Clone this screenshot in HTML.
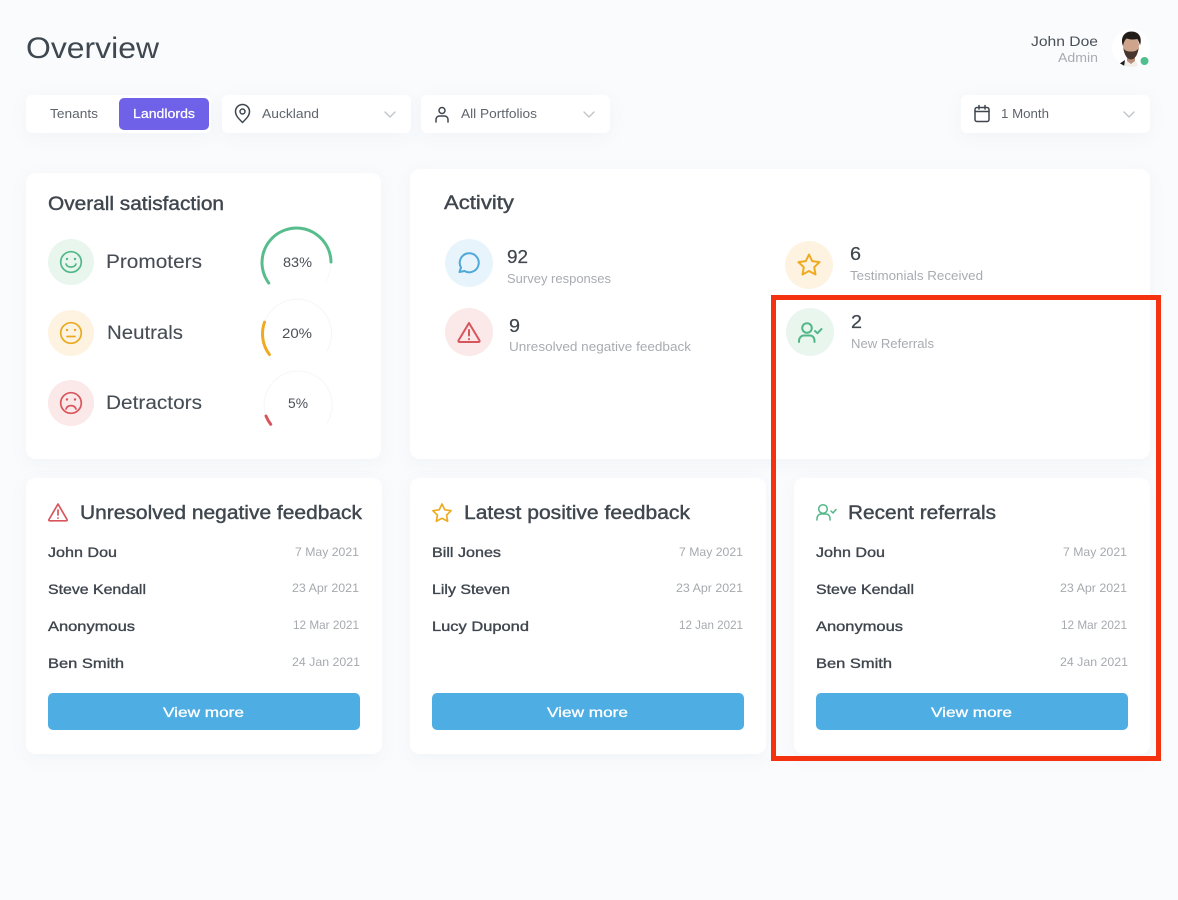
<!DOCTYPE html>
<html lang="en"><head><meta charset="utf-8"><title>Overview</title>
<style>
html,body{margin:0;padding:0;background:#f9fbfd;width:1178px;height:900px;overflow:hidden}
body{position:relative;font-family:"Liberation Sans",sans-serif}
.c{position:absolute;background:#fff;box-shadow:0 4px 18px rgba(90,110,140,.05)}
.r10{border-radius:10px}.r6{border-radius:6px}
svg.o{position:absolute;left:0;top:0}
text{font-family:"Liberation Sans",sans-serif;fill:#3f464e}
.h{font-size:19px;stroke:#3f464e;stroke-width:.4}
.l{font-size:19px;fill:#464d55;stroke:#464d55;stroke-width:.1}
.s{font-size:13px;fill:#5f656c}
.g{font-size:12.5px;fill:#a8acb2}
.d{font-size:12px;fill:#a6aab0}
.n{font-size:14px;stroke:#3f464e;stroke-width:.35}
.b{font-size:14px;fill:#fff;stroke:#fff;stroke-width:.3}
.p{font-size:14px;fill:#4a5058}
.v{font-size:18px;fill:#3f464e;stroke:#3f464e;stroke-width:.2}
.i{fill:none;stroke-linecap:round;stroke-linejoin:round}
</style></head><body>
<div class="c r6" style="left:26px;top:95px;width:185px;height:38px"></div>
<div class="c" style="left:119px;top:98px;width:90px;height:32px;border-radius:5px;background:#6f62e8;box-shadow:none"></div>
<div class="c r6" style="left:222px;top:95px;width:189px;height:38px"></div>
<div class="c r6" style="left:421px;top:95px;width:189px;height:38px"></div>
<div class="c r6" style="left:961px;top:95px;width:189px;height:38px"></div>
<div class="c r10" style="left:26px;top:173px;width:355px;height:286px"></div>
<div class="c r10" style="left:410px;top:169px;width:740px;height:290px"></div>
<div class="c r10" style="left:26px;top:478px;width:356px;height:276px"></div>
<div class="c r10" style="left:410px;top:478px;width:356px;height:276px"></div>
<div class="c r10" style="left:794px;top:478px;width:356px;height:276px"></div>
<div class="c" style="left:48px;top:693px;width:312px;height:37px;border-radius:5px;background:#4eaee3;box-shadow:none"></div>
<div class="c" style="left:432px;top:693px;width:312px;height:37px;border-radius:5px;background:#4eaee3;box-shadow:none"></div>
<div class="c" style="left:816px;top:693px;width:312px;height:37px;border-radius:5px;background:#4eaee3;box-shadow:none"></div>

<svg class="o" width="1178" height="900" viewBox="0 0 1178 900" xmlns="http://www.w3.org/2000/svg">
<defs><clipPath id="av"><circle cx="1131" cy="48" r="19"/></clipPath></defs>
<!-- header -->
<text x="26" y="58" font-size="30" textLength="133" lengthAdjust="spacingAndGlyphs" style="fill:#3f4850">Overview</text>
<text x="1031" y="46" class="p" textLength="67" lengthAdjust="spacingAndGlyphs">John Doe</text>
<text x="1058" y="62" class="g" textLength="40" lengthAdjust="spacingAndGlyphs">Admin</text>
<!-- avatar -->
<circle cx="1131" cy="48" r="19" fill="#fff"/>
<g clip-path="url(#av)">
<path d="M1123 68l2-6 6-2 6 2 2 6z" fill="#f2efeb"/>
<path d="M1119 64l6-4-1 7z" fill="#1d1d1f"/>
<path d="M1127 54h8v7l-4 3-4-3z" fill="#b98d76"/>
<ellipse cx="1131" cy="46" rx="8" ry="11" fill="#cfa48d"/>
<path d="M1123.500 48c.5 7 4 11.500 7.500 11.500s7-4.500 7.500-11.500c-1.500 3-3.500 3.500-7.500 3.500s-6-.5-7.500-3.500z" fill="#46362f"/>
<path d="M1123 46c-3-8 1-14.500 8.500-14.500s11 6 8.500 14c-.8-3-1.500-5-2.800-6.500-3.700 1-7.500.5-10.700-.5-2 2-2.800 4-3.500 7.500z" fill="#231d1a"/>
</g>
<circle cx="1144.500" cy="61" r="4" fill="#4fc08d"/>
<!-- filters -->
<text x="50" y="118" class="s" textLength="48" lengthAdjust="spacingAndGlyphs">Tenants</text>
<text x="133" y="118" font-size="13" textLength="62" lengthAdjust="spacingAndGlyphs" style="fill:#fff;stroke:#fff;stroke-width:.25">Landlords</text>
<g class="i" stroke="#3f464e" stroke-width="1.500">
<path d="M242.500 122.500c-4-4-7-7-7-11a7 7 0 0 1 14 0c0 4-3 7-7 11z"/><circle cx="242.500" cy="111.500" r="2.500"/>
<circle cx="442" cy="110.500" r="3"/><path d="M436 122v-2.500a3.500 3.500 0 0 1 3.500-3.500h5a3.500 3.500 0 0 1 3.500 3.500v2.500"/>
<rect x="975" y="107.500" width="14" height="14" rx="2"/><path d="M975 111.500h14M979 105.500v3.500M985 105.500v3.500"/>
</g>
<g class="i" stroke="#bfc3c8" stroke-width="1.300">
<path d="M385 112l5 5 5-5M584 112l5 5 5-5M1124 112l5 5 5-5"/>
</g>
<text x="262" y="118" class="s" textLength="57" lengthAdjust="spacingAndGlyphs">Auckland</text>
<text x="461" y="118" class="s" textLength="76" lengthAdjust="spacingAndGlyphs">All Portfolios</text>
<text x="1001" y="118" class="s" textLength="48" lengthAdjust="spacingAndGlyphs">1 Month</text>

<!-- satisfaction -->
<text x="48" y="210" class="h" textLength="176" lengthAdjust="spacingAndGlyphs">Overall satisfaction</text>
<circle cx="71" cy="262" r="23" fill="#e8f6ee"/>
<circle cx="71" cy="333" r="23" fill="#fdf3e0"/>
<circle cx="71" cy="403" r="23" fill="#fbe8e9"/>
<g class="i" stroke-width="1.700">
<g stroke="#52b788"><circle cx="71" cy="262" r="10.300"/><path d="M66 264c1.500 4 8.500 4 10 0"/></g>
<g stroke="#eaa920"><circle cx="71" cy="333" r="10.300"/><path d="M67 336.500h8"/></g>
<g stroke="#d9555c"><circle cx="71" cy="403" r="10.300"/><path d="M66 409c1.500-4.500 8.500-4.500 10 0"/></g>
</g>
<g>
<circle cx="67" cy="259" r="1.200" fill="#52b788"/><circle cx="75" cy="259" r="1.200" fill="#52b788"/>
<circle cx="67" cy="330" r="1.200" fill="#eaa920"/><circle cx="75" cy="330" r="1.200" fill="#eaa920"/>
<circle cx="67" cy="399.500" r="1.200" fill="#d9555c"/><circle cx="75" cy="399.500" r="1.200" fill="#d9555c"/>
</g>
<text x="106" y="268" class="l" textLength="96" lengthAdjust="spacingAndGlyphs">Promoters</text>
<text x="107" y="339" class="l" textLength="76" lengthAdjust="spacingAndGlyphs">Neutrals</text>
<text x="106" y="409" class="l" textLength="96" lengthAdjust="spacingAndGlyphs">Detractors</text>
<g class="i" stroke-width="3">
<path d="M331 263A34.500 34.500 0 0 1 326 281" stroke="#f6f7f9" stroke-width="1"/>
<path d="M268.800 283.100A34.500 34.500 0 1 1 331 262" stroke="#57bd8c"/>
<path d="M264.500 322.200A34.500 34.500 0 1 1 327 350.800" stroke="#f5f6f8" stroke-width="1"/>
<path d="M264.500 322.200A34.500 34.500 0 0 0 269.400 354.500" stroke="#eeab22"/>
<path d="M266 416A34 34 0 1 1 327 423" stroke="#f5f6f8" stroke-width="1"/>
<path d="M266 416A34 34 0 0 0 270.700 424.300" stroke="#d9555c"/>
</g>
<text x="283" y="267" class="p" textLength="29" lengthAdjust="spacingAndGlyphs">83%</text>
<text x="282" y="338" class="p" textLength="30" lengthAdjust="spacingAndGlyphs">20%</text>
<text x="288" y="408" class="p" textLength="20" lengthAdjust="spacingAndGlyphs">5%</text>

<!-- activity -->
<text x="444" y="209" class="h" textLength="70" lengthAdjust="spacingAndGlyphs">Activity</text>
<circle cx="469" cy="263" r="24" fill="#e8f4fb"/>
<circle cx="469" cy="332" r="24" fill="#fbe8e9"/>
<circle cx="809" cy="265" r="24" fill="#fdf3e0"/>
<circle cx="810" cy="332" r="24" fill="#e8f6ee"/>
<g class="i" stroke-width="2">
<path d="M459.500 272l1.500-4.500a9.500 9.500 0 1 1 3.500 3.500z" stroke="#4fa8d8"/>
<path d="M469 323l-10.500 17.500a1 1 0 0 0 1 1.500h19a1 1 0 0 0 1-1.500zM469 330v5.500M469 339v.2" stroke="#d9555c"/>
<path d="M809 254.500l3.200 6.600 7.300 1-5.300 5.100 1.300 7.300-6.500-3.500-6.500 3.500 1.300-7.300-5.300-5.100 7.300-1z" stroke="#eeab22"/>
<g stroke="#52b788"><circle cx="807" cy="328" r="4.800"/><path d="M799 342v-1c0-3.500 2.500-5.500 5-5.500h6c2.500 0 4.500 2 4.500 5.500v1"/><path d="M815 331l2.500 2.200 4-4.200"/></g>
</g>
<text x="507" y="263" class="v" textLength="21" lengthAdjust="spacingAndGlyphs">92</text>
<text x="507" y="283" class="g" textLength="104" lengthAdjust="spacingAndGlyphs">Survey responses</text>
<text x="509" y="332" class="v" textLength="11" lengthAdjust="spacingAndGlyphs">9</text>
<text x="509" y="351" class="g" textLength="182" lengthAdjust="spacingAndGlyphs">Unresolved negative feedback</text>
<text x="850" y="260" class="v" textLength="11" lengthAdjust="spacingAndGlyphs">6</text>
<text x="850" y="280" class="g" textLength="133" lengthAdjust="spacingAndGlyphs">Testimonials Received</text>
<text x="851" y="328" class="v" textLength="11" lengthAdjust="spacingAndGlyphs">2</text>
<text x="851" y="348" class="g" textLength="83" lengthAdjust="spacingAndGlyphs">New Referrals</text>

<!-- card 1 -->
<path class="i" d="M58 504l-9 15.500a.8.8 0 0 0 .7 1.300h16.600a.8.8 0 0 0 .7-1.300zM58 510v5M58 518v.2" stroke="#d9555c" stroke-width="1.700"/>
<text x="80" y="519" class="h" textLength="282" lengthAdjust="spacingAndGlyphs">Unresolved negative feedback</text>
<text x="48" y="557" class="n" textLength="69" lengthAdjust="spacingAndGlyphs">John Dou</text>
<text x="48" y="594" class="n" textLength="98" lengthAdjust="spacingAndGlyphs">Steve Kendall</text>
<text x="48" y="631" class="n" textLength="87" lengthAdjust="spacingAndGlyphs">Anonymous</text>
<text x="48" y="668" class="n" textLength="76" lengthAdjust="spacingAndGlyphs">Ben Smith</text>
<text x="295" y="556" class="d" textLength="64" lengthAdjust="spacingAndGlyphs">7 May 2021</text>
<text x="292" y="592" class="d" textLength="67" lengthAdjust="spacingAndGlyphs">23 Apr 2021</text>
<text x="293" y="629" class="d" textLength="66" lengthAdjust="spacingAndGlyphs">12 Mar 2021</text>
<text x="292" y="666" class="d" textLength="68" lengthAdjust="spacingAndGlyphs">24 Jan 2021</text>
<text x="163" y="717" class="b" textLength="81" lengthAdjust="spacingAndGlyphs">View more</text>

<!-- card 2 -->
<path class="i" d="M442 504l2.800 5.800 6.300.9-4.500 4.400 1 6.200-5.600-3-5.600 3 1-6.200-4.500-4.400 6.300-.9z" stroke="#eeab22" stroke-width="1.700"/>
<text x="464" y="519" class="h" textLength="226" lengthAdjust="spacingAndGlyphs">Latest positive feedback</text>
<text x="432" y="557" class="n" textLength="69" lengthAdjust="spacingAndGlyphs">Bill Jones</text>
<text x="432" y="594" class="n" textLength="78" lengthAdjust="spacingAndGlyphs">Lily Steven</text>
<text x="432" y="631" class="n" textLength="97" lengthAdjust="spacingAndGlyphs">Lucy Dupond</text>
<text x="679" y="556" class="d" textLength="64" lengthAdjust="spacingAndGlyphs">7 May 2021</text>
<text x="676" y="592" class="d" textLength="67" lengthAdjust="spacingAndGlyphs">23 Apr 2021</text>
<text x="679" y="629" class="d" textLength="64" lengthAdjust="spacingAndGlyphs">12 Jan 2021</text>
<text x="547" y="717" class="b" textLength="81" lengthAdjust="spacingAndGlyphs">View more</text>

<!-- card 3 -->
<g class="i" stroke="#52b788" stroke-width="1.500">
<circle cx="823" cy="509" r="4.300"/><path d="M817 520v-1.500c0-2.500 2-4.500 4-4.500h5c2.500 0 4 2 4 4.500v1.500"/><path d="M831 511l2 2 3-3.500"/>
</g>
<text x="848" y="519" class="h" textLength="148" lengthAdjust="spacingAndGlyphs">Recent referrals</text>
<text x="816" y="557" class="n" textLength="69" lengthAdjust="spacingAndGlyphs">John Dou</text>
<text x="816" y="594" class="n" textLength="98" lengthAdjust="spacingAndGlyphs">Steve Kendall</text>
<text x="816" y="631" class="n" textLength="87" lengthAdjust="spacingAndGlyphs">Anonymous</text>
<text x="816" y="668" class="n" textLength="76" lengthAdjust="spacingAndGlyphs">Ben Smith</text>
<text x="1063" y="556" class="d" textLength="64" lengthAdjust="spacingAndGlyphs">7 May 2021</text>
<text x="1060" y="592" class="d" textLength="67" lengthAdjust="spacingAndGlyphs">23 Apr 2021</text>
<text x="1061" y="629" class="d" textLength="66" lengthAdjust="spacingAndGlyphs">12 Mar 2021</text>
<text x="1060" y="666" class="d" textLength="68" lengthAdjust="spacingAndGlyphs">24 Jan 2021</text>
<text x="931" y="717" class="b" textLength="81" lengthAdjust="spacingAndGlyphs">View more</text>

<!-- highlight -->
<rect x="773.500" y="297.500" width="385" height="461" fill="none" stroke="#f5320f" stroke-width="5"/>
</svg>
</body></html>
